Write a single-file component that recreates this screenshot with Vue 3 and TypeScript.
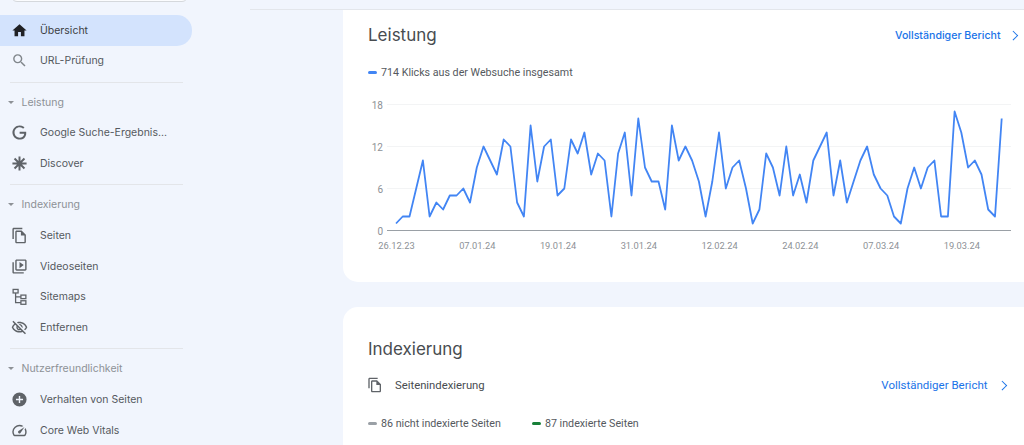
<template>
  <div class="page">
    <aside class="sidebar">
      <div class="search"></div>
      <template v-for="group in navGroups" :key="group.title">
        <div v-if="group.title" class="group-title">
          <span class="caret"></span>
          {{ group.title }}
        </div>
        <a v-for="item in group.items" :key="item.label" class="nav-item" :class="{ active: item.active }">
          <svg class="nav-icon" viewBox="0 0 24 24" v-html="item.icon"></svg>
          <span>{{ item.label }}</span>
        </a>
        <div v-if="group.divider" class="divider"></div>
      </template>
    </aside>

    <main class="content">
      <div class="topbar"></div>

      <section class="card card-perf">
        <div class="card-head">
          <h2>Leistung</h2>
          <a class="report-link">Vollständiger Bericht <span class="chevron"></span></a>
        </div>
        <div class="legend legend-perf">
          <span class="legend-item"><i class="dash blue"></i>714 Klicks aus der Websuche insgesamt</span>
        </div>
        <svg class="chart" width="656" height="158" viewBox="368 92 656 158">
          <line v-for="t in ticks" :key="t" x1="387" x2="1011" :y1="yFor(t)" :y2="yFor(t)" :stroke="t === 0 ? '#9aa0a6' : '#f3f4f5'" :stroke-width="t === 0 ? 1.2 : 1" />
          <text v-for="t in ticks" :key="'y' + t" class="axis" x="383" :y="yFor(t) + 4" text-anchor="end">{{ t }}</text>
          <text v-for="(d, i) in dates" :key="d" class="axis date" :x="396.5 + i * stepX * 12" y="249" text-anchor="middle">{{ d }}</text>
          <polyline :points="linePoints" fill="none" stroke="#4285f4" stroke-width="1.8" stroke-linejoin="round" />
        </svg>
      </section>

      <section class="card card-index">
        <h2>Indexierung</h2>
        <div class="sub-row">
          <span class="sub-title">
            <svg class="sub-icon" viewBox="0 0 24 24"><path :d="pagesPath" fill="#5f6368" /></svg>
            Seitenindexierung
          </span>
          <a class="report-link narrow">Vollständiger Bericht <span class="chevron"></span></a>
        </div>
        <div class="legend legend-index">
          <span class="legend-item"><i class="dash gray"></i>86 nicht indexierte Seiten</span>
          <span class="legend-item"><i class="dash green"></i>87 indexierte Seiten</span>
        </div>
      </section>
    </main>
  </div>
</template>

<script setup lang="ts">
import { computed } from 'vue';

const pagesPath = 'M16 1H4c-1.1 0-2 .9-2 2v14h2V3h12V1zm-1 4H8c-1.1 0-1.99.9-1.99 2L6 21c0 1.1.89 2 1.99 2H19c1.1 0 2-.9 2-2V11l-6-6zM8 21V7h6v5h5v9H8z';

const p = (d: string) => `<path fill="#5f6368" fill-rule="evenodd" d="${d}"/>`;

const icons = {
  home: '<path fill="#202124" d="M10 20v-6h4v6h5v-8h3L12 3 2 12h3v8z"/>',
  search: '<path fill="#80868b" d="M15.5 14h-.79l-.28-.27A6.471 6.471 0 0 0 16 9.5 6.5 6.5 0 1 0 9.5 16c1.61 0 3.09-.59 4.23-1.57l.27.28v.79l5 4.99L20.49 19l-4.99-5zm-6 0C7.01 14 5 11.99 5 9.5S7.01 5 9.5 5 14 7.01 14 9.5 11.99 14 9.5 14z"/>',
  google: p('M21.35 11.1h-9.17v2.73h6.51c-.33 3.81-3.5 5.44-6.5 5.44C8.36 19.27 5 16.25 5 12c0-4.1 3.2-7.27 7.2-7.27 3.09 0 4.9 1.97 4.9 1.97L19 4.72S16.56 2 12.1 2C6.42 2 2.03 6.8 2.03 12c0 5.05 4.13 10 10.22 10 5.35 0 9.25-3.67 9.25-9.09 0-1.15-.15-1.81-.15-1.81z'),
  discover: '<g stroke="#5f6368" stroke-width="2.8"><path d="M12 2v20M2 12h20M5 5l14 14M19 5L5 19"/></g><circle cx="12" cy="12" r="4" fill="#5f6368"/>',
  pages: p(pagesPath),
  video: p('M4 6H2v14c0 1.1.9 2 2 2h14v-2H4V6zm16-4H8c-1.1 0-2 .9-2 2v12c0 1.1.9 2 2 2h12c1.1 0 2-.9 2-2V4c0-1.1-.9-2-2-2zm0 14H8V4h12v12zM12 5.5v9l6-4.5z'),
  sitemap: '<g fill="none" stroke="#5f6368" stroke-width="1.8"><rect x="3" y="2" width="7" height="5"/><rect x="14" y="10" width="7" height="5"/><rect x="14" y="18" width="7" height="5"/><path d="M6.5 7v13.5H14M6.5 12.5H14"/></g>',
  eyeOff: p('M12 6c3.79 0 7.17 2.13 8.82 5.5-.59 1.22-1.42 2.27-2.41 3.12l1.41 1.41c1.39-1.23 2.49-2.77 3.18-4.53C21.27 7.11 17 4 12 4c-1.27 0-2.49.2-3.64.57l1.65 1.65C10.66 6.09 11.32 6 12 6zm-1.07 1.14L13 9.21c.57.25 1.03.71 1.28 1.28l2.07 2.07c.08-.34.14-.7.14-1.07C16.5 9.01 14.48 7 12 7c-.37 0-.72.05-1.07.14zM2.01 3.87l2.68 2.68C3.06 7.83 1.77 9.53 1 11.5 2.73 15.89 7 19 12 19c1.52 0 2.98-.29 4.32-.82l3.42 3.42 1.41-1.41L3.42 2.45 2.01 3.87zm7.5 7.5l2.61 2.61c-.04.01-.08.02-.12.02-1.38 0-2.5-1.12-2.5-2.5 0-.05.01-.08.01-.13zm-3.4-3.4l1.75 1.75c-.23.55-.36 1.15-.36 1.78 0 2.48 2.02 4.5 4.5 4.5.63 0 1.23-.13 1.77-.36l.98.98c-.88.24-1.8.38-2.75.38-3.79 0-7.17-2.13-8.82-5.5.7-1.43 1.72-2.61 2.93-3.53z'),
  behaviour: p('M12 2a10 10 0 1 0 0 20 10 10 0 0 0 0-20zm5 11h-4v4h-2v-4H7v-2h4V7h2v4h4v2z'),
  vitals: p('M20.38 8.57l-1.23 1.85a8 8 0 0 1-.22 7.58H5.07A8 8 0 0 1 15.58 6.85l1.85-1.23A10 10 0 0 0 3.35 19a2 2 0 0 0 1.72 1h13.85a2 2 0 0 0 1.74-1 10 10 0 0 0-.27-10.44zm-9.79 6.84a2 2 0 0 0 2.83 0l5.66-8.49-8.49 5.66a2 2 0 0 0 0 2.83z'),
};

interface NavItem { label: string; icon: string; active?: boolean }
interface NavGroup { title: string; items: NavItem[]; divider: boolean }

const navGroups: NavGroup[] = [
  {
    title: '',
    divider: true,
    items: [
      { label: 'Übersicht', icon: icons.home, active: true },
      { label: 'URL-Prüfung', icon: icons.search },
    ],
  },
  {
    title: 'Leistung',
    divider: true,
    items: [
      { label: 'Google Suche-Ergebnis...', icon: icons.google },
      { label: 'Discover', icon: icons.discover },
    ],
  },
  {
    title: 'Indexierung',
    divider: true,
    items: [
      { label: 'Seiten', icon: icons.pages },
      { label: 'Videoseiten', icon: icons.video },
      { label: 'Sitemaps', icon: icons.sitemap },
      { label: 'Entfernen', icon: icons.eyeOff },
    ],
  },
  {
    title: 'Nutzerfreundlichkeit',
    divider: false,
    items: [
      { label: 'Verhalten von Seiten', icon: icons.behaviour },
      { label: 'Core Web Vitals', icon: icons.vitals },
    ],
  },
];

const clicks = [
  1, 2, 2, 6, 10, 2, 4, 3, 5, 5, 6, 4, 9, 12, 10, 8, 13, 12, 4, 2, 15, 7, 12, 13, 5, 6,
  13, 11, 14, 8, 11, 10, 2, 11, 14, 5, 16, 9, 7, 7, 3, 15, 10, 12, 10, 7, 2, 7, 14, 6, 9, 10, 6, 1, 3, 11, 9, 5, 12,
  5, 8, 4, 10, 12, 14, 5, 10, 4, 7, 10, 12, 8, 6, 5, 2, 1, 6, 9, 6, 9, 10, 2, 2, 17, 14, 9, 10, 8, 3, 2, 16,
];
const ticks = [18, 12, 6, 0];
const dates = ['26.12.23', '07.01.24', '19.01.24', '31.01.24', '12.02.24', '24.02.24', '07.03.24', '19.03.24'];

const stepX = 6.73;
const yFor = (v: number) => 230.5 - v * 7;
const linePoints = computed(() => clicks.map((v, i) => `${(396 + i * stepX).toFixed(1)},${yFor(v)}`).join(' '));
</script>

<style>
html, body {
  margin: 0;
  overflow: hidden;
}
</style>

<style scoped>
.page {
  display: flex;
  width: 1024px;
  height: 445px;
  overflow: hidden;
  background: #f1f5fd;
  font-family: Inter, "Noto Sans", sans-serif;
}

.sidebar {
  width: 250px;
  flex: none;
}

.search {
  width: 175px;
  height: 12px;
  margin: -12.5px 0 13.5px 11px;
  border: 1px solid #d5d8dc;
  border-radius: 6px;
  background: #fbfcfe;
}

.nav-item {
  display: flex;
  align-items: center;
  gap: 12px;
  width: 181px;
  height: 30.6px;
  padding-left: 11px;
  border-radius: 0 15px 15px 0;
  font-size: 10.5px;
  color: #55595e;
}

.nav-item.active {
  background: #d3e3fd;
  color: #3c4043;
}

.nav-icon {
  width: 17px;
  height: 17px;
  flex: none;
}

.divider {
  width: 173px;
  height: 1px;
  margin: 5.5px 0 0 10px;
  background: #e3e5e9;
}

.group-title {
  display: flex;
  align-items: center;
  height: 31px;
  padding-left: 8px;
  margin-top: 4px;
  font-size: 10.5px;
  color: #8d9196;
}

.caret {
  width: 0;
  height: 0;
  margin-right: 7.5px;
  border-left: 3px solid transparent;
  border-right: 3px solid transparent;
  border-top: 3.5px solid #8d9196;
}

.content {
  flex: 1;
  min-width: 0;
}

.topbar {
  height: 9px;
  border-bottom: 1px solid #e3e6eb;
}

.card {
  margin-left: 93px;
  background: #fff;
  padding-left: 25px;
}

.card-perf {
  height: 272px;
  border-radius: 0 0 0 15px;
  box-sizing: border-box;
}

.card-index {
  margin-top: 25px;
  height: 140px;
  border-radius: 15px 0 0 0;
  box-sizing: border-box;
  padding-top: 32px;
}

.card-head {
  display: flex;
  align-items: center;
  justify-content: space-between;
  height: 50px;
  padding-right: 7px;
}

h2 {
  margin: 0;
  font-size: 17px;
  font-weight: 400;
  color: #484c50;
}

.report-link {
  display: flex;
  align-items: center;
  font-size: 10.6px;
  font-weight: 500;
  color: #1a73e8;
}

.chevron {
  width: 5.5px;
  height: 5.5px;
  margin: 0 1px 0 9px;
  border-top: 1.5px solid #1a73e8;
  border-right: 1.5px solid #1a73e8;
  transform: rotate(45deg);
}

.legend {
  display: flex;
  font-family: Roboto, sans-serif;
  font-size: 10.7px;
  color: #55595e;
}

.legend-perf {
  margin-top: 4px;
  height: 16px;
  align-items: center;
}

.legend-item {
  display: flex;
  align-items: center;
}

.dash {
  width: 9px;
  height: 3px;
  margin-right: 4px;
  border-radius: 2px;
}

.blue { background: #4285f4; }
.gray { background: #9aa0a6; }
.green { background: #188038; }

.chart {
  display: block;
  margin-top: 12px;
}

.axis {
  font-family: Roboto, sans-serif;
  font-size: 10px;
  fill: #8d9196;
}

.axis.date {
  font-size: 9.3px;
}

.sub-row {
  display: flex;
  align-items: center;
  justify-content: space-between;
  margin-top: 14px;
  height: 24px;
  padding-right: 18px;
}

.sub-title {
  display: flex;
  align-items: center;
  gap: 12px;
  font-family: Roboto, sans-serif;
  font-size: 11.3px;
  color: #484c50;
}

.sub-icon {
  width: 16px;
  height: 16px;
  margin-left: -1px;
}

.narrow {
  font-family: Roboto, sans-serif;
  font-size: 11.5px;
  font-weight: 400;
}

.narrow .chevron {
  margin-left: 11px;
}

.legend-index {
  gap: 31px;
  margin-top: 20px;
}
</style>
